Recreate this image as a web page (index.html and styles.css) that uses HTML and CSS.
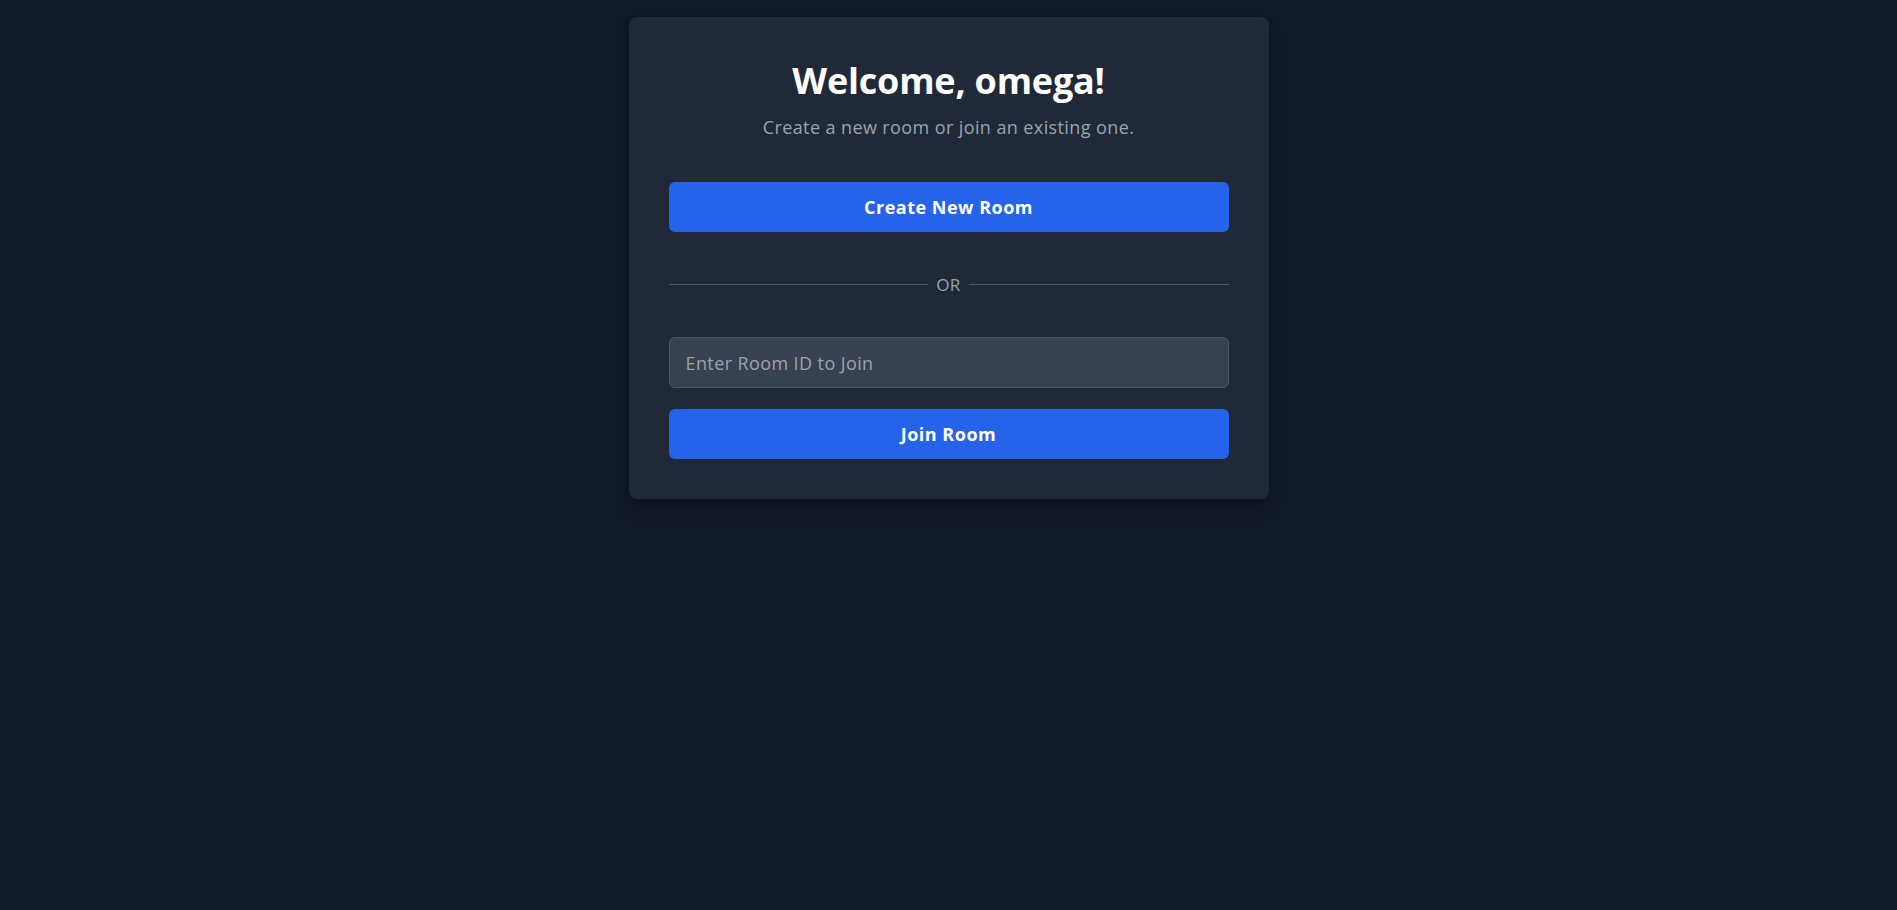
FILE: index.html
```html
<!DOCTYPE html>
<html lang="en">
<head>
<meta charset="utf-8">
<title>Welcome</title>
<link rel="stylesheet" href="styles.css">
</head>
<body>
<main class="page">
  <section class="card">
    <header class="card-header">
      <h1 class="title">Welcome, omega!</h1>
      <p class="subtitle">Create a new room or join an existing one.</p>
    </header>
    <button class="btn" type="button">Create New Room</button>
    <div class="divider">
      <span class="divider-line"></span>
      <span class="divider-text">OR</span>
      <span class="divider-line"></span>
    </div>
    <form class="join-form" onsubmit="return false;">
      <input class="room-input" type="text" placeholder="Enter Room ID to Join">
      <button class="btn" type="submit">Join Room</button>
    </form>
  </section>
</main>
</body>
</html>
```

FILE: styles.css
```css
* {
  box-sizing: border-box;
}

html, body {
  margin: 0;
  padding: 0;
  height: 100%;
}

body {
  background: #111827;
  font-family: "Open Sans", "Noto Sans", "Liberation Sans", sans-serif;
  color: #ffffff;
}

.page {
  display: flex;
  justify-content: center;
  padding-top: 17px;
}

.card {
  width: 640px;
  background: #1f2937;
  border-radius: 8px;
  padding: 40px;
  box-shadow: 0 10px 15px -3px rgba(0, 0, 0, 0.3);
}

.card-header {
  text-align: center;
  margin-bottom: 41px;
}

.title {
  margin: 0;
  font-size: 36px;
  line-height: 48px;
  font-weight: 700;
  color: #ffffff;
  letter-spacing: -0.2px;
}

.subtitle {
  margin: 8px 0 0;
  font-size: 18px;
  line-height: 28px;
  color: #9ca3af;
  letter-spacing: 0.4px;
}

.btn {
  display: block;
  width: 100%;
  height: 50px;
  border: none;
  border-radius: 6px;
  background: #2563eb;
  color: #ffffff;
  font-family: inherit;
  font-size: 18px;
  font-weight: 700;
  letter-spacing: 0.5px;
  cursor: pointer;
}

.divider {
  display: flex;
  align-items: center;
  height: 24px;
  margin: 40px 0 41px;
}

.divider-line {
  flex: 1;
  height: 1px;
  background: #4b5563;
}

.divider-text {
  padding: 0 8px;
  font-size: 17px;
  color: #9ca3af;
  letter-spacing: 0.3px;
}

.join-form {
  display: flex;
  flex-direction: column;
  gap: 21px;
}

.room-input {
  width: 100%;
  height: 51px;
  padding: 0 16px;
  border: 1px solid #4b5563;
  border-radius: 6px;
  background: #374151;
  color: #ffffff;
  font-family: inherit;
  font-size: 18px;
  letter-spacing: 0.4px;
  outline: none;
}

.room-input::placeholder {
  color: #9ca3af;
}
```
